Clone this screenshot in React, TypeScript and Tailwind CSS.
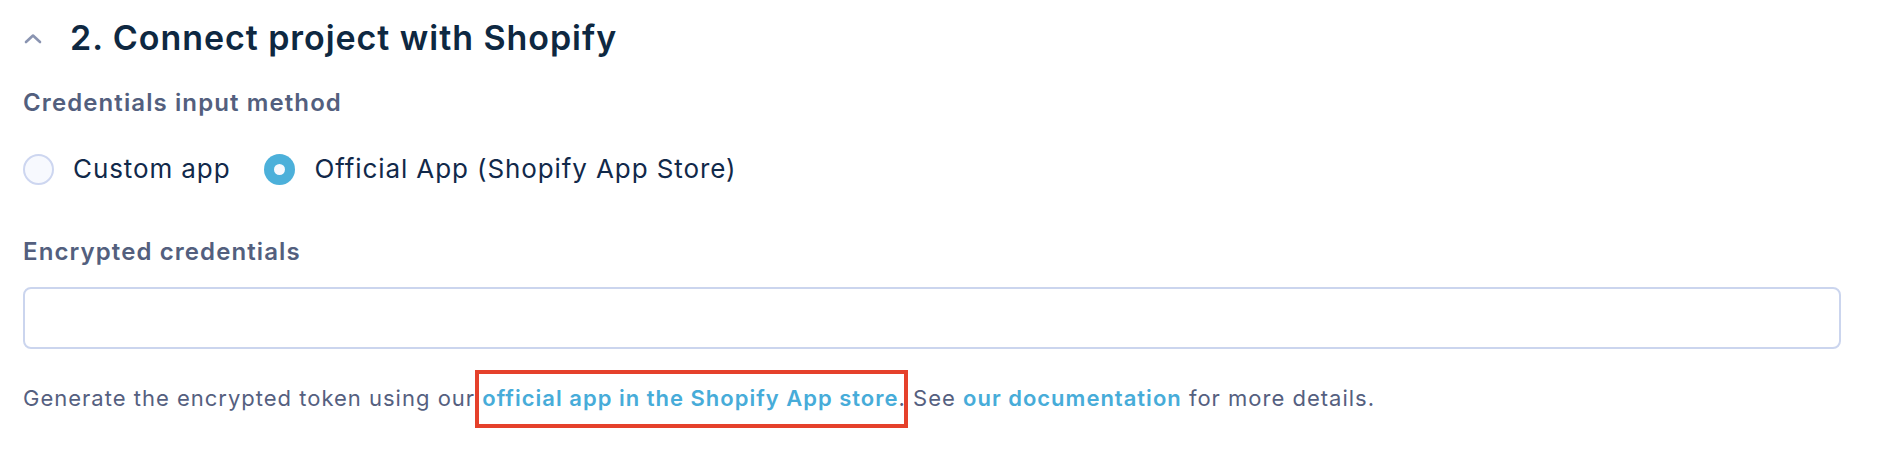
import React from 'react';

function Radio({ checked, label }: { checked?: boolean; label: string }) {
  return (
    <label className="flex items-center gap-[19px]">
      {checked ? (
        <span className="flex h-[31px] w-[31px] items-center justify-center rounded-full bg-[#4cb0da]">
          <span className="h-[11px] w-[11px] rounded-full bg-[#f7f9fe]" />
        </span>
      ) : (
        <span className="h-[31px] w-[31px] rounded-full border-2 border-[#cdd6f0] bg-[#f7f9fe]" />
      )}
      <span className="text-[26px] leading-[32px] tracking-[0.9px] text-[#11294a]">{label}</span>
    </label>
  );
}

export default function App() {
  return (
    <div
      className="min-h-[452px] w-[1890px] bg-white pl-[23px] pt-[18px]"
      style={{ fontFamily: 'Inter, "Noto Sans", sans-serif' }}
    >
      {/* section header */}
      <div className="flex items-center">
        <svg width="18" height="11" viewBox="0 0 18 11" className="ml-[1px] mr-[28px]" fill="none">
          <path d="M2 9 L9 2.5 L16 9" stroke="#8a94b1" strokeWidth="2.6" strokeLinecap="round" strokeLinejoin="round" />
        </svg>
        <h2 className="text-[34px] leading-[40px] font-semibold tracking-[0.95px] text-[#0e2841]">
          2. Connect project with Shopify
        </h2>
      </div>

      <p className="mt-[29px] text-[24px] leading-[32px] font-semibold tracking-[1.1px] text-[#535f7e]">
        Credentials input method
      </p>

      <div className="mt-[34px] flex items-center gap-[34px]">
        <Radio label="Custom app" />
        <Radio checked label="Official App (Shopify App Store)" />
      </div>

      <p className="mt-[51px] text-[24px] leading-[32px] font-semibold tracking-[1.1px] text-[#535f7e]">
        Encrypted credentials
      </p>

      <input
        type="text"
        className="mt-[19px] block h-[62px] w-[1818px] rounded-lg border-2 border-[#cbd5ee] bg-white px-4 outline-none"
      />

      <p className="mt-[33px] text-[22px] leading-[32px] tracking-[1px] text-[#55607f]">
        Generate the encrypted token using our
        <span className="relative">
          {' '}
          <a href="#" className="font-semibold text-[#47acd9]">
            official app in the Shopify App store
          </a>
          {/* annotation box */}
          <span className="pointer-events-none absolute -top-[15px] -bottom-[17px] left-0 -right-[9px] border-4 border-[#e5412b]" />
        </span>
        . See{' '}
        <a href="#" className="font-semibold text-[#47acd9]">
          our documentation
        </a>{' '}
        for more details.
      </p>
    </div>
  );
}
